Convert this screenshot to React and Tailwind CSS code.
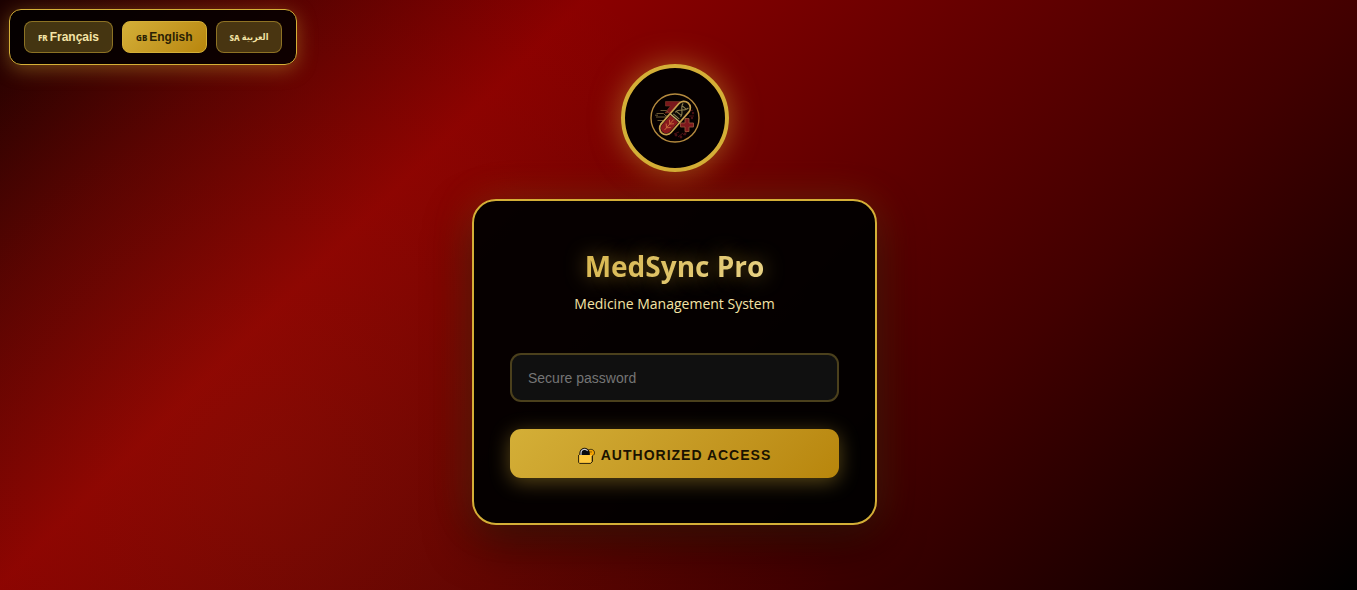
import React, { useState } from 'react';

const languages = [
  { code: 'fr', flag: 'FR', label: 'Français' },
  { code: 'en', flag: 'GB', label: 'English' },
  { code: 'ar', flag: 'SA', label: 'العربية' },
];

const LanguageSelector = ({ current, onChange }) => (
  <nav
    aria-label="Language"
    className="absolute top-[9px] left-[9px] flex gap-[9px] rounded-xl border border-[#d4af37] bg-black/85 px-3.5 py-[11px] shadow-[0_4px_20px_rgba(212,175,55,0.4)]"
  >
    {languages.map((lang) => (
      <button
        key={lang.code}
        type="button"
        onClick={() => onChange(lang.code)}
        className={`flex h-8 items-center gap-0.5 rounded-lg border px-[13px] font-['Liberation_Sans','DejaVu_Sans_Condensed','DejaVu_Sans',sans-serif] text-xs font-bold ${
          current === lang.code
            ? 'border-[#d4af37] bg-linear-135 from-[#d4af37] to-[#b8860b] text-[#2a1f04]'
            : 'border-[#d4af37]/50 bg-[#d4af37]/30 text-[#f4e4a6]'
        }`}
      >
        <span className="pt-0.5 font-['Noto_Sans',sans-serif] text-[8px] font-extrabold">{lang.flag}</span>
        <span className={lang.code === 'ar' ? "font-['DejaVu_Sans_Condensed','DejaVu_Sans',sans-serif] text-[9px]" : ''}>
          {lang.label}
        </span>
      </button>
    ))}
  </nav>
);

const Logo = () => (
  <svg viewBox="0 0 50 50" fill="none" className="size-[50px]" role="img" aria-label="MedSync Pro logo">
    <circle cx="25" cy="25" r="24" stroke="#b58a3e" strokeWidth="1.4" />
    {/* letter shape behind the capsule */}
    <path d="M15.5 8.5H30v4L23.5 20H15l5.5-7h-5z" fill="#7a171c" stroke="#7d3a26" strokeWidth="0.6" />
    {/* circuit traces */}
    <g stroke="#75623a" strokeWidth="0.9">
      <path d="M6.5 20.5h7l2.5 2.5h4M6 24h11M7.5 27.5h9M5 22.2h3M10 31l4-4M10.5 17.5h6l2 2" />
      <path d="M24 41l5-2M28 44l5-4M33 42l5-4M38 19l5-2M39 23h5" stroke="#551216" />
    </g>
    <g fill="#481014">
      <circle cx="26" cy="42" r="1.4" />
      <circle cx="31" cy="44" r="1.4" />
      <circle cx="35" cy="41" r="1.4" />
      <circle cx="43" cy="20" r="1.2" />
      <circle cx="42" cy="25" r="1.2" />
    </g>
    {/* cross */}
    <path
      d="M35 25.5h4v4.5h4.5v4H39v4.5h-4V34h-4.5v-4H35z"
      fill="#7e181d"
      stroke="#955036"
      strokeWidth="0.9"
    />
    {/* capsule */}
    <g transform="rotate(41 25 25)">
      <rect x="18.5" y="5" width="13" height="40" rx="6.5" fill="#0d0905" stroke="#c7a04d" strokeWidth="1.7" />
      <path d="M19.8 26h10.4v12.5a5.2 5.2 0 0 1-10.4 0z" fill="#8a191c" />
      <path d="M21.5 8.5c0 6 7 6 7 12M28.5 8.5c0 6-7 6-7 12M22.5 11h5M22 19h6M21 23h8" stroke="#8d8050" strokeWidth="1" />
      <path d="M18.5 25h13" stroke="#c7b06a" strokeWidth="1.4" />
      <path d="M25 27v14M22 30l3 3 3-3M22 35l3 3 3-3" stroke="#c56b3b" strokeWidth="0.9" />
    </g>
  </svg>
);

const LockIcon = () => (
  <svg viewBox="0 0 17 17" fill="none" className="size-[17px]" aria-hidden="true">
    {/* key */}
    <path
      d="M10 3.4c1-.9 2.2-1.1 3.4-1 1.8.2 3.1 1.6 3.1 3.4 0 1.4-.8 2.4-2 2.9v5.3l-1.5 1.5H10z"
      fill="#f5a300"
      stroke="#171208"
      strokeWidth="0.8"
    />
    <circle cx="13" cy="4.9" r="0.7" fill="#5a3c00" />
    {/* shackle */}
    <path d="M1.8 8.5V6a4.8 4.8 0 0 1 9.6 0v2.5z" fill="#0a0a0f" stroke="#171208" strokeWidth="0.8" />
    <path d="M3 8V6a3.6 3.6 0 0 1 6.6-2" stroke="#c8c8d0" strokeWidth="1.2" />
    {/* body */}
    <path d="M1 8h13v6.7l-1.4 1.4H1z" fill="#ffc83d" />
    <path d="M0.6 8v7.3l1 1.1h11l1.6-1.6V9" stroke="#171208" strokeWidth="0.9" />
  </svg>
);

const App = () => {
  const [language, setLanguage] = useState('en');
  const [password, setPassword] = useState('');

  return (
    <div className="relative flex min-h-screen flex-col items-center justify-center bg-[radial-gradient(circle_at_20%_80%,rgba(212,175,55,0.06)_0%,transparent_50%),linear-gradient(135deg,#1a0000_0%,#570000_15%,#8b0000_30%,#420000_70%,#000_100%)] pr-2 pb-0.5 font-['Open_Sans','Noto_Sans',sans-serif]">
      <LanguageSelector current={language} onChange={setLanguage} />

      <div className="mb-[27px] flex size-[108px] items-center justify-center rounded-full border-4 border-[#d4af37] bg-black/95 shadow-[0_0_30px_rgba(212,175,55,0.5)]">
        <Logo />
      </div>

      <main className="w-full max-w-[405px] rounded-3xl border-2 border-[#d4af37] bg-black/95 px-9 pt-11 pb-[45px] text-center shadow-[0_18px_45px_rgba(0,0,0,0.5),0_0_40px_rgba(212,175,55,0.2)]">
        <h1 className="bg-linear-135 from-[#d4af37] to-[#f4e4a6] bg-clip-text text-[28px] leading-[43px] font-bold text-transparent [text-shadow:0_0_20px_rgba(212,175,55,0.5)]">
          MedSync Pro
        </h1>
        <p className="mt-1.5 text-sm leading-5 font-medium text-[#f4e4a6]">Medicine Management System</p>

        <form className="mt-[39px]" onSubmit={(e) => e.preventDefault()}>
          <input
            type="password"
            aria-label="Secure password"
            placeholder="Secure password"
            value={password}
            onChange={(e) => setPassword(e.target.value)}
            className="block h-[49px] w-full rounded-[11px] border-2 border-[#d4af37]/30 bg-[#101010] px-4 pt-0.5 font-['Liberation_Sans',sans-serif] text-sm text-white placeholder:text-[#757575]"
          />
          <button
            type="submit"
            className="mt-[27px] flex h-[49px] w-full items-center justify-center gap-1.5 rounded-[11px] bg-linear-135 from-[#d4af37] to-[#b8860b] pt-1 font-['Liberation_Sans',sans-serif] text-sm font-bold tracking-[1px] text-[#1a1200] uppercase shadow-[0_4px_20px_rgba(212,175,55,0.4)]"
          >
            <LockIcon />
            Authorized Access
          </button>
        </form>
      </main>
    </div>
  );
};

export default App;
